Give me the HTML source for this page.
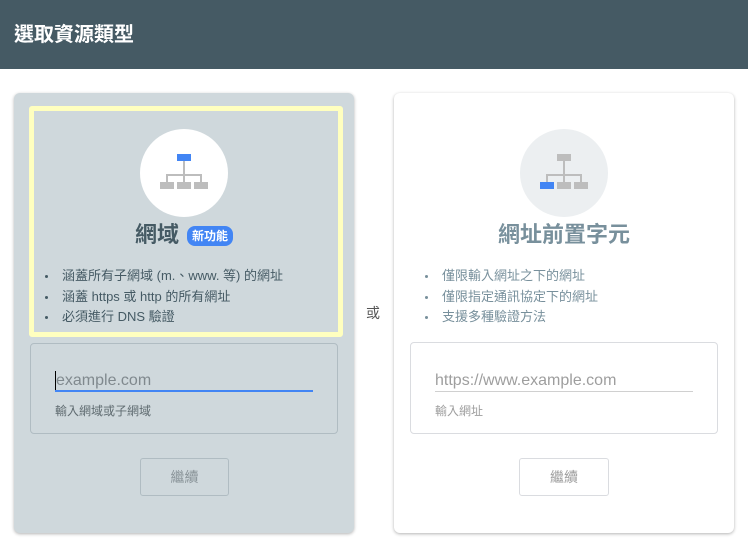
<!DOCTYPE html>
<html><head><meta charset="utf-8"><style>
*{margin:0;padding:0;box-sizing:border-box}
body{width:748px;height:549px;background:#fff;font-family:"Liberation Sans","Noto Sans CJK TC",sans-serif;position:relative;overflow:hidden}
.hdr{position:absolute;left:0;top:0;width:748px;height:69px;background:#455a64}
.hdr span{position:absolute;left:14px;top:21px;color:#fff;font-size:20px;font-weight:bold;line-height:28px}
.card{position:absolute;top:93px;width:340px;height:440px;border-radius:6px;box-shadow:0 1px 3px rgba(0,0,0,.3)}
.a{position:absolute}
.circ{position:absolute;width:88px;height:88px;border-radius:50%}
.r{position:absolute;width:14px;height:7px;background:#bdbdbd}
ul{position:absolute;list-style:none;font-size:13px;line-height:20.5px}
li{position:relative;padding-left:18px}
li:before{content:"";position:absolute;left:1px;top:9px;width:3px;height:3px;border-radius:50%;background:currentColor}
.ln{position:absolute;background:#bdbdbd}
</style></head><body>
<div class="hdr"><span>選取資源類型</span></div>

<div class="card" style="left:14px;background:#cfd8dc">
 <div class="a" style="left:15px;top:13px;width:314px;height:231px;border:5px solid #ffffbf;border-radius:3px"></div>
 <div class="circ" style="left:126px;top:36px;background:#fff"></div>
 <div class="r" style="left:163px;top:61px;background:#4285f4"></div>
 <div class="ln" style="left:169px;top:68px;width:2px;height:21px"></div>
 <div class="ln" style="left:152px;top:81px;width:36px;height:2px"></div>
 <div class="ln" style="left:152px;top:81px;width:2px;height:8px"></div>
 <div class="ln" style="left:186px;top:81px;width:2px;height:8px"></div>
 <div class="r" style="left:146px;top:89px"></div><div class="r" style="left:163px;top:89px"></div><div class="r" style="left:180px;top:89px"></div>
 <div class="a" style="left:121px;top:128px;font-size:22px;font-weight:bold;color:#455a64;line-height:28px">網域</div>
 <div class="a" style="left:173px;top:133px;width:46px;height:20px;border-radius:8px;background:#4285f4;color:#fff;font-size:12px;font-weight:bold;line-height:20px;text-align:center">新功能</div>
 <ul style="left:30px;top:173px;color:#455a64"><li>涵蓋所有子網域 (m.、www. 等) 的網址</li><li>涵蓋 https 或 http 的所有網址</li><li>必須進行 DNS 驗證</li></ul>
 <div class="a" style="left:16px;top:250px;width:308px;height:91px;border:1px solid #b0bcc2;border-radius:4px"></div>
 <div class="a" style="left:41px;top:278px;font-size:16px;color:#80898e;line-height:20px;border-left:1px solid #000;padding-left:0">example.com</div>
 <div class="a" style="left:41px;top:297px;width:258px;height:2px;background:#4285f4"></div>
 <div class="a" style="left:41px;top:310px;font-size:12px;color:#5f6b70;line-height:16px">輸入網域或子網域</div>
 <div class="a" style="left:126px;top:365px;width:89px;height:38px;border:1px solid #b0bcc2;border-radius:3px;font-size:14px;color:#8a9499;text-align:center;line-height:36px">繼續</div>
</div>

<div class="a" style="left:366px;top:303px;font-size:14px;color:#555">或</div>

<div class="card" style="left:394px;background:#fff">
 <div class="circ" style="left:126px;top:36px;background:#eceff1"></div>
 <div class="r" style="left:163px;top:61px"></div>
 <div class="ln" style="left:169px;top:68px;width:2px;height:21px"></div>
 <div class="ln" style="left:152px;top:81px;width:36px;height:2px"></div>
 <div class="ln" style="left:152px;top:81px;width:2px;height:8px"></div>
 <div class="ln" style="left:186px;top:81px;width:2px;height:8px"></div>
 <div class="r" style="left:146px;top:89px;background:#4285f4"></div><div class="r" style="left:163px;top:89px"></div><div class="r" style="left:180px;top:89px"></div>
 <div class="a" style="left:0;width:340px;text-align:center;top:128px;font-size:22px;font-weight:bold;color:#78909c;line-height:28px">網址前置字元</div>
 <ul style="left:30px;top:173px;color:#78909c"><li>僅限輸入網址之下的網址</li><li>僅限指定通訊協定下的網址</li><li>支援多種驗證方法</li></ul>
 <div class="a" style="left:16px;top:249px;width:308px;height:92px;border:1px solid #dadce0;border-radius:4px"></div>
 <div class="a" style="left:41px;top:278px;font-size:16px;color:#9e9e9e;line-height:20px">https://www.example.com</div>
 <div class="a" style="left:41px;top:298px;width:258px;height:1px;background:#d0d0d0"></div>
 <div class="a" style="left:41px;top:310px;font-size:12px;color:#9e9e9e;line-height:16px">輸入網址</div>
 <div class="a" style="left:125px;top:365px;width:90px;height:38px;border:1px solid #dadce0;border-radius:3px;font-size:14px;color:#9e9e9e;text-align:center;line-height:36px">繼續</div>
</div>
</body></html>
